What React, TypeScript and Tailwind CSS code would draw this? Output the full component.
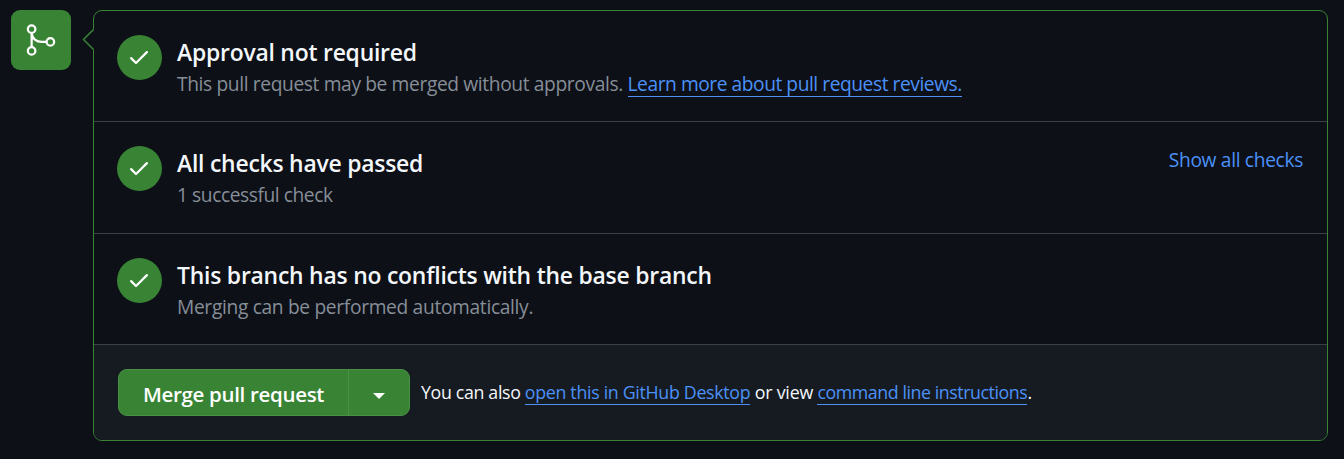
import type { ReactNode } from "react";

function MergeIcon() {
  return (
    <svg viewBox="0 0 24 24" className="size-9" fill="none" stroke="#fff" strokeWidth="1.5">
      <circle cx="5.75" cy="4.75" r="2.5" />
      <circle cx="5.75" cy="19.25" r="2.5" />
      <circle cx="18.25" cy="13.25" r="2.5" />
      <path d="M5.75 7.25v9.5M5.75 7.5c.3 3.6 3.2 5.75 6.75 5.75h3.25" />
    </svg>
  );
}

function CheckBadge() {
  return (
    <div className="flex size-[45px] shrink-0 items-center justify-center rounded-full bg-[#388434] pb-px pr-px">
      <svg viewBox="0 0 16 16" className="size-6" fill="#fff">
        <path d="M13.78 4.22a.75.75 0 0 1 0 1.06l-7.25 7.25a.75.75 0 0 1-1.06 0L2.22 9.28a.751.751 0 0 1 .018-1.042.751.751 0 0 1 1.042-.018L6 10.94l6.72-6.72a.75.75 0 0 1 1.06 0Z" />
      </svg>
    </div>
  );
}

function Row({ title, height, children, action }: { title: string; height: string; children: ReactNode; action?: ReactNode }) {
  return (
    <div className={`flex gap-[15px] border-b border-[#3b4048] pl-[23px] pr-6 pt-6 ${height}`}>
      <CheckBadge />
      <div className="flex-1 whitespace-nowrap">
        <h3 className="h-[35px] text-[22.9px] font-semibold leading-[36px] tracking-[-0.22px] text-[#f4f7fa]">{title}</h3>
        <p className="text-[19.2px] leading-7 text-[#868e98]">{children}</p>
      </div>
      {action}
    </div>
  );
}

export default function App() {
  return (
    <div className="flex h-[459px] w-[1344px] items-start bg-[#0d1017] pl-[11px] pt-[10px] font-['Open_Sans','Noto_Sans',sans-serif]">
      <div className="flex size-[60px] items-center justify-center rounded-[9px] bg-[#388434]">
        <MergeIcon />
      </div>
      <section className="relative ml-[22px] h-[431px] w-[1235px] rounded-[9px] border border-[#388434]">
        <svg className="absolute -left-[12px] top-[17px] h-[24px] w-[13px]" viewBox="0 0 13 24" fill="none">
          <path d="M13 1 11.5 1.5 1.5 11.5 11.5 21.5 13 22Z" fill="#0d1017" />
          <path d="M11.5 1.5 1.5 11.5 11.5 21.5" stroke="#388434" strokeWidth="1.5" />
        </svg>
        <Row height="h-[111px]" title="Approval not required">
          <span className="tracking-[-0.37px]">This pull request may be merged without approvals. </span>
          <a className="inline-block h-[27px] border-b border-[#4b91f7] leading-7 tracking-[-0.45px] text-[#4b91f7]">Learn more about pull request reviews.</a>
        </Row>
        <Row
          height="h-[112px]"
          title="All checks have passed"
          action={<a className="text-[19.2px] leading-7 tracking-[-0.33px] text-[#4b91f7]">Show all checks</a>}
        >
          <span className="tracking-[-0.43px]">1 successful check</span>
        </Row>
        <Row height="h-[111px]" title="This branch has no conflicts with the base branch">
          <span className="tracking-[-0.33px]">Merging can be performed automatically.</span>
        </Row>
        <footer className="flex h-[95px] rounded-b-[8px] bg-[#161b22] pl-6 pt-6">
          <div className="flex h-[47px] w-[292px] overflow-hidden rounded-[9px] border border-[#4c9048] bg-[#388434]">
            <button className="w-[230px] whitespace-nowrap border-r border-[#4c9048] pt-[3px] text-[20.5px] font-semibold leading-[42px] tracking-[-0.32px] text-white">Merge pull request</button>
            <button className="flex flex-1 items-center justify-center pt-[7px]" aria-label="Select merge method">
              <svg className="h-[6px] w-[12px]" viewBox="0 0 12 6" fill="#fff">
                <path d="M0 0H12L6 6Z" />
              </svg>
            </button>
          </div>
          <p className="ml-[11px] whitespace-pre text-[17.8px] leading-[46px] text-[#f4f7fa]">
            <span className="tracking-[-0.34px]">You can also </span>
            <a className="inline-block h-[27px] border-b border-[#4b91f7] leading-7 tracking-[-0.31px] text-[#4b91f7]">open this in GitHub Desktop</a>
            <span className="tracking-[-0.2px]"> or view </span>
            <a className="inline-block h-[27px] border-b border-[#4b91f7] leading-7 tracking-[-0.43px] text-[#4b91f7]">command line instructions</a>.
          </p>
        </footer>
      </section>
    </div>
  );
}
